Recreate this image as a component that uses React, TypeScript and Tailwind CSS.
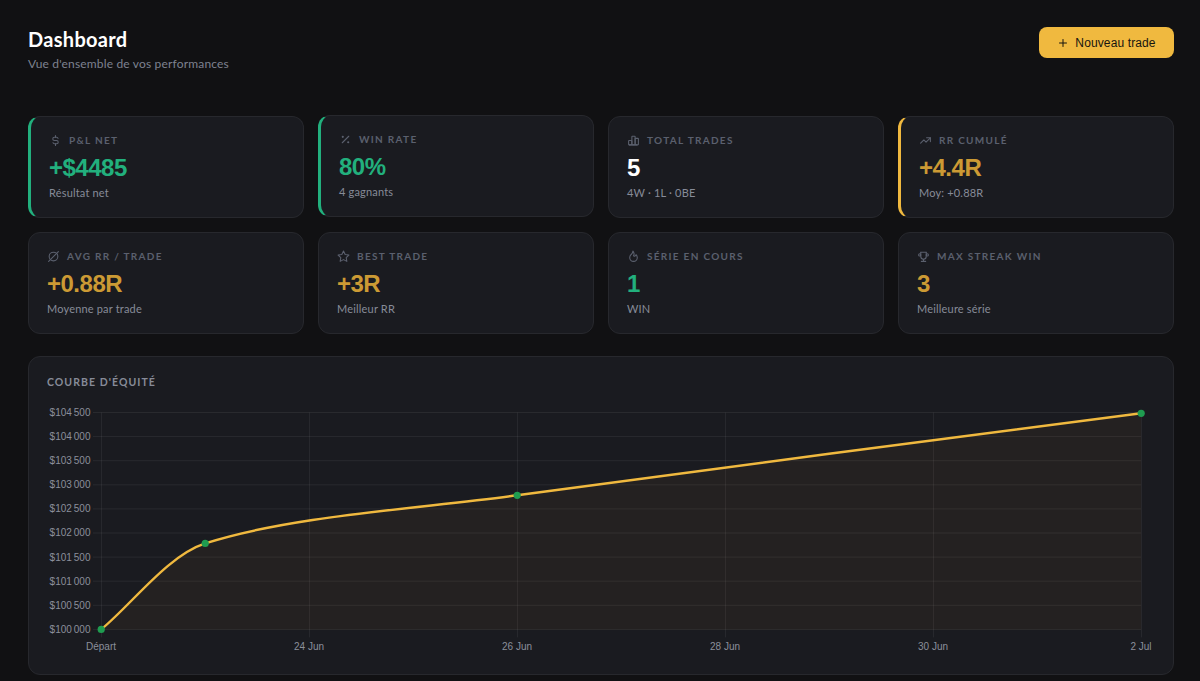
import type { IconType } from "react-icons";
import {
  TbChartBar,
  TbCurrencyDollar,
  TbFlame,
  TbMathAvg,
  TbPercentage,
  TbPlus,
  TbStar,
  TbTrendingUp,
  TbTrophy,
} from "react-icons/tb";

type Stat = {
  label: string;
  value: string;
  sub: string;
  icon: IconType;
  tone: string;
  frame: string;
};

const plain = "border-l border-l-[#27282d]";
const green = "border-l-[3px] border-l-[#22b07d]";
const gold = "border-l-[3px] border-l-[#f0b93f]";

const stats: Stat[] = [
  { label: "P&L NET", value: "+$4485", sub: "Résultat net", icon: TbCurrencyDollar, tone: "text-[#22b07d]", frame: green },
  { label: "WIN RATE", value: "80%", sub: "4 gagnants", icon: TbPercentage, tone: "text-[#22b07d]", frame: `${green} -translate-y-px` },
  { label: "TOTAL TRADES", value: "5", sub: "4W · 1L · 0BE", icon: TbChartBar, tone: "text-white", frame: plain },
  { label: "RR CUMULÉ", value: "+4.4R", sub: "Moy: +0.88R", icon: TbTrendingUp, tone: "text-[#cc9a34]", frame: gold },
  { label: "AVG RR / TRADE", value: "+0.88R", sub: "Moyenne par trade", icon: TbMathAvg, tone: "text-[#cc9a34]", frame: plain },
  { label: "BEST TRADE", value: "+3R", sub: "Meilleur RR", icon: TbStar, tone: "text-[#cc9a34]", frame: plain },
  { label: "SÉRIE EN COURS", value: "1", sub: "WIN", icon: TbFlame, tone: "text-[#22b07d]", frame: plain },
  { label: "MAX STREAK WIN", value: "3", sub: "Meilleure série", icon: TbTrophy, tone: "text-[#cc9a34]", frame: plain },
];

function StatCard({ stat }: { stat: Stat }) {
  const Icon = stat.icon;
  return (
    <div className={`h-[102px] rounded-xl border-y border-r border-y-[#27282d] border-r-[#27282d] bg-[#1a1b20] px-[18px] pt-[15px] ${stat.frame}`}>
      <div className="flex h-4 items-center gap-[7px] text-[#5b606e]">
        <Icon size={13} strokeWidth={2} />
        <span className="text-[10px] leading-4 font-bold tracking-[1.3px] whitespace-nowrap">{stat.label}</span>
      </div>
      <div className={`mt-[5px] h-[30px] font-['Liberation_Sans',Arial,sans-serif] text-2xl leading-[30px] font-bold tracking-[-0.5px] ${stat.tone}`}>
        {stat.value}
      </div>
      <div className="mt-[2px] text-[11px] leading-4 tracking-[0.18px] text-[#878b98]">{stat.sub}</div>
    </div>
  );
}

type Point = { x: number; y: number };

const LEFT = 54.2;
const TOP = 18.5;
const STEP_X = 208;
const STEP_Y = 24.1;
const BASE = TOP + STEP_Y * 9;

const points: Point[] = [
  { x: LEFT, y: BASE },
  { x: LEFT + STEP_X / 2, y: 149.4 },
  { x: LEFT + STEP_X * 2, y: 101.3 },
  { x: LEFT + STEP_X * 5, y: 19.3 },
];

const yLabels = ["104 500", "104 000", "103 500", "103 000", "102 500", "102 000", "101 500", "101 000", "100 500", "100 000"];
const xLabels = ["Départ", "24 Jun", "26 Jun", "28 Jun", "30 Jun", "2 Jul"];

function controls(prev: Point, cur: Point, next: Point, tension: number) {
  const a = Math.hypot(cur.x - prev.x, cur.y - prev.y);
  const b = Math.hypot(next.x - cur.x, next.y - cur.y);
  const fa = (tension * a) / (a + b);
  const fb = (tension * b) / (a + b);
  const dx = next.x - prev.x;
  const dy = next.y - prev.y;
  return { before: { x: cur.x - fa * dx, y: cur.y - fa * dy }, after: { x: cur.x + fb * dx, y: cur.y + fb * dy } };
}

function spline(pts: Point[]) {
  const c = pts.map((p, i) => controls(pts[i - 1] ?? p, p, pts[i + 1] ?? p, 0.3));
  return pts
    .map((p, i) =>
      i === 0
        ? `M${p.x} ${p.y}`
        : `C${c[i - 1].after.x} ${c[i - 1].after.y} ${c[i].before.x} ${c[i].before.y} ${p.x} ${p.y}`,
    )
    .join(" ");
}

function EquityChart() {
  const line = spline(points);
  return (
    <svg viewBox="0 0 1108 262" className="block h-[262px] w-[1108px] font-['Liberation_Sans',Arial,sans-serif] text-[10px]">
      <g stroke="#ffffff" strokeOpacity="0.065" strokeWidth="1">
        {yLabels.map((label, i) => (
          <line key={label} x1="46" x2={LEFT + STEP_X * 5} y1={TOP + STEP_Y * i} y2={TOP + STEP_Y * i} />
        ))}
        {xLabels.map((label, i) => (
          <line key={label} x1={LEFT + STEP_X * i + 0.2} x2={LEFT + STEP_X * i + 0.2} y1={TOP} y2={BASE + 8} />
        ))}
      </g>
      <path d={`${line} V${BASE} H${LEFT} Z`} fill="#f0a540" fillOpacity="0.052" />
      <path d={line} fill="none" stroke="#f0b93f" strokeWidth="2.4" />
      {points.map((p) => (
        <circle key={p.x} cx={p.x} cy={p.y} r="3.6" fill="#1f9c50" />
      ))}
      <g fill="#8b8f9b">
        {yLabels.map((label, i) => (
          <text key={label} x="43.5" y={TOP + STEP_Y * i + 3.4} textAnchor="end">
            ${label.replace(" ", "\u202f")}
          </text>
        ))}
        {xLabels.map((label, i) => (
          <text key={label} x={LEFT + STEP_X * i - 0.2} y="255.5" textAnchor="middle">
            {label}
          </text>
        ))}
      </g>
    </svg>
  );
}

export default function App() {
  return (
    <main className="h-[681px] overflow-hidden bg-[#111113] pr-[26px] pl-7 font-[Lato,sans-serif] text-white">
      <header className="flex h-[116px] items-start justify-between pt-[27px]">
        <div className="-mt-px">
          <h1 className="text-xl leading-[26px] font-bold tracking-[0.3px]">Dashboard</h1>
          <p className="mt-[3px] text-[12px] leading-[18px] tracking-[0.17px] text-[#7e8290]">Vue d'ensemble de vos performances</p>
        </div>
        <button className="flex h-[31px] w-[135px] items-center justify-center gap-1.5 rounded-lg bg-[#f0b93f] font-['Liberation_Sans',Arial,sans-serif] text-[12px] tracking-[0.12px] text-[#17150f]">
          <TbPlus size={12} />
          Nouveau trade
        </button>
      </header>
      <section className="grid grid-cols-4 gap-[14px]">
        {stats.map((stat) => (
          <StatCard key={stat.label} stat={stat} />
        ))}
      </section>
      <section className="mt-[22px] h-[319px] rounded-xl border border-[#27282d] bg-[#1a1b20] px-[18px] pt-4">
        <h2 className="h-[21px] text-[10.5px] leading-[18px] font-bold tracking-[1.05px] text-[#878b98]">COURBE D'ÉQUITÉ</h2>
        <EquityChart />
      </section>
    </main>
  );
}
